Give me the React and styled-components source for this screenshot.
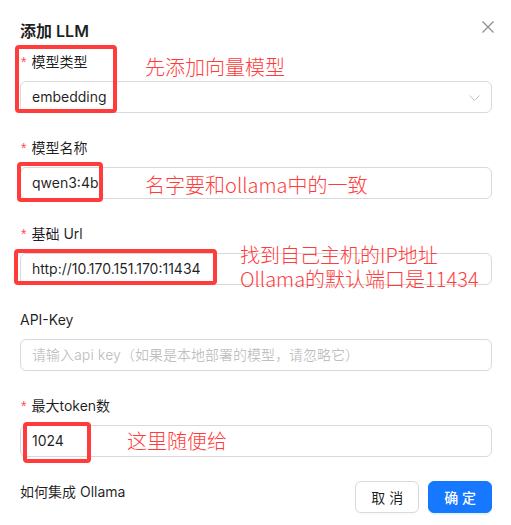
import React from 'react';
import styled, { createGlobalStyle } from 'styled-components';

const GlobalStyle = createGlobalStyle`
  html, body {
    margin: 0;
    padding: 0;
    background: #ffffff;
  }
  body {
    font-family: Inter, "Noto Sans CJK SC", sans-serif;
    font-size: 14px;
    color: rgba(0, 0, 0, 0.88);
  }
`;

const fields = [
  {
    label: '模型类型',
    required: true,
    value: 'embedding',
    select: true,
    mark: { left: -5, top: -6, width: 102, height: 68 },
    note: { left: 125, top: 4, lines: ['先添加向量模型'] },
  },
  {
    label: '模型名称',
    required: true,
    value: 'qwen3:4b',
    mark: { left: -3, top: 25, width: 86, height: 40 },
    note: { left: 125, top: 36, lines: ['名字要和ollama中的一致'] },
  },
  {
    label: '基础 Url',
    required: true,
    value: 'http://10.170.151.170:11434',
    mark: { left: -6, top: 26, width: 203, height: 36 },
    note: { left: 220, top: 20, lines: ['找到自己主机的IP地址', 'Ollama的默认端口是11434'] },
  },
  {
    label: 'API-Key',
    placeholder: '请输入api key（如果是本地部署的模型，请忽略它）',
  },
  {
    label: '最大token数',
    required: true,
    value: '1024',
    mark: { left: 3, top: 27, width: 68, height: 41 },
    note: { left: 107, top: 34, lines: ['这里随便给'] },
  },
];

function App() {
  return (
    <Page>
      <GlobalStyle />
      <Header>
        <Title>添加 LLM</Title>
        <CloseButton aria-label="close">
          <svg width="12" height="12" viewBox="0 0 12 12" fill="none">
            <path d="M0.5 0.5L11.5 11.5M11.5 0.5L0.5 11.5" stroke="#8c8c8c" strokeWidth="1.2" />
          </svg>
        </CloseButton>
      </Header>

      <Form>
        {fields.map(field => (
          <FormItem key={field.label}>
            <Label>
              {field.required && <Star>*</Star>}
              {field.label}
            </Label>
            <InputBox>
              {field.value ? <Value>{field.value}</Value> : <Placeholder>{field.placeholder}</Placeholder>}
              {field.select && (
                <Chevron width="11" height="6" viewBox="0 0 11 6" fill="none">
                  <path d="M0.5 0.5L5.5 5.5L10.5 0.5" stroke="#bfbfbf" strokeWidth="1" />
                </Chevron>
              )}
            </InputBox>
            {field.mark && <Mark style={field.mark} />}
            {field.note && (
              <Note style={{ left: field.note.left, top: field.note.top }}>
                {field.note.lines.map(line => (
                  <div key={line}>{line}</div>
                ))}
              </Note>
            )}
          </FormItem>
        ))}
      </Form>

      <Footer>
        <HelpLink>如何集成 Ollama</HelpLink>
        <Actions>
          <Button>取 消</Button>
          <Button primary>确 定</Button>
        </Actions>
      </Footer>
    </Page>
  );
}

export default App;

const Page = styled.div`
  width: 511px;
  height: 525px;
  box-sizing: border-box;
  padding: 19px 19px 0 20px;
`

const Header = styled.div`
  display: flex;
  justify-content: space-between;
  align-items: center;
  height: 24px;
  margin-bottom: 8px;
`

const Title = styled.div`
  font-size: 16px;
  font-weight: 600;
  line-height: 24px;
  color: rgba(0, 0, 0, 0.88);
`

const CloseButton = styled.div`
  display: flex;
  align-items: center;
  justify-content: center;
  width: 22px;
  height: 22px;
  margin-top: -8px;
  margin-right: -7px;
`

const Form = styled.div`
  display: flex;
  flex-direction: column;
`

const FormItem = styled.div`
  position: relative;
  margin-bottom: 24px;
`

const Label = styled.div`
  display: flex;
  align-items: center;
  height: 22px;
  padding-bottom: 8px;
  line-height: 22px;
  font-size: 14px;
  color: rgba(0, 0, 0, 0.88);
`

const Star = styled.span`
  display: inline-block;
  margin-left: 1px;
  margin-right: 5px;
  color: #ff4d4f;
  font-family: SimSong, "Liberation Sans", sans-serif;
  font-size: 14px;
  line-height: 1;
`

const InputBox = styled.div`
  display: flex;
  align-items: center;
  justify-content: space-between;
  box-sizing: border-box;
  width: 472px;
  height: 32px;
  padding: 4px 11px;
  border: 1px solid #d9d9d9;
  border-radius: 6px;
  background: #ffffff;
`

const Value = styled.span`
  font-size: 14px;
  line-height: 22px;
  color: rgba(0, 0, 0, 0.88);
`

const Placeholder = styled.span`
  font-size: 14px;
  line-height: 22px;
  color: rgba(0, 0, 0, 0.25);
`

const Chevron = styled.svg`
  margin-top: 1px;
`

const Mark = styled.div`
  position: absolute;
  box-sizing: border-box;
  border: 4px solid #ff3b3b;
  border-radius: 4px;
  pointer-events: none;
`

const Note = styled.div`
  position: absolute;
  font-family: "Noto Sans CJK SC", sans-serif;
  font-size: 20px;
  font-weight: 300;
  line-height: 24px;
  color: #ff3b3b;
  white-space: nowrap;
`

const Footer = styled.div`
  display: flex;
  justify-content: space-between;
  align-items: flex-start;
  width: 472px;
`

const HelpLink = styled.div`
  font-size: 14px;
  line-height: 22px;
  color: rgba(0, 0, 0, 0.88);
`

const Actions = styled.div`
  display: flex;
  gap: 9px;
`

const Button = styled.div`
  display: flex;
  align-items: center;
  justify-content: center;
  box-sizing: border-box;
  height: 32px;
  padding: 0 15px;
  border-radius: 6px;
  font-size: 14px;
  font-weight: ${props => (props.primary ? 500 : 400)};
  border: 1px solid ${props => (props.primary ? '#1677ff' : '#d9d9d9')};
  background: ${props => (props.primary ? '#1677ff' : '#ffffff')};
  color: ${props => (props.primary ? '#ffffff' : 'rgba(0, 0, 0, 0.88)')};
  box-shadow: ${props => (props.primary ? '0 2px 0 rgba(5, 145, 255, 0.1)' : '0 2px 0 rgba(0, 0, 0, 0.02)')};
`
